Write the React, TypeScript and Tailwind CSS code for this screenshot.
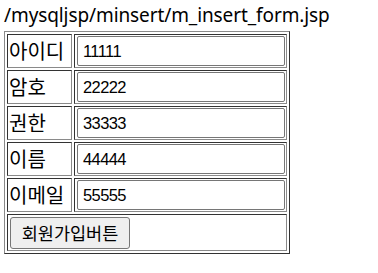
import React from "react";

const rows = [
  { label: "아이디", value: "11111" },
  { label: "암호", value: "22222" },
  { label: "권한", value: "33333" },
  { label: "이름", value: "44444" },
  { label: "이메일", value: "55555" },
];

const tdCls =
  "border border-t-[#333] border-l-[#333] border-r-[#8a8a8a] border-b-[#8a8a8a] p-px align-middle";

export default function App() {
  return (
    <div
      className="bg-white w-[378px] h-[273px] pl-[4px] text-black"
      style={{ fontFamily: '"Noto Sans", "Noto Sans CJK KR", sans-serif' }}
    >
      <div className="h-[31px] text-[19px] leading-[31px] tracking-[-0.1px] whitespace-nowrap">
        /mysqljsp/minsert/m_insert_form.jsp
      </div>
      <table className="border-separate border-spacing-[2px] border border-t-[#8a8a8a] border-l-[#8a8a8a] border-r-[#333] border-b-[#333]">
        <tbody>
          {rows.map((r) => (
            <tr key={r.label}>
              <td className={tdCls + " w-[65px] h-[34px]"}>
                <span
                  className="block text-[20px] leading-[30px] whitespace-nowrap"
                  style={{ fontFamily: '"Noto Sans CJK KR", sans-serif' }}
                >
                  {r.label}
                </span>
              </td>
              <td className={tdCls + " w-[213px] h-[34px]"}>
                <div className="ml-[1px] w-[208px] h-[30px] border border-[#767676] rounded-[2px] flex items-center px-[5px]">
                  <span
                    className="text-[16.5px] leading-none tracking-[-0.6px]"
                    style={{ fontFamily: '"Liberation Sans", Arial, sans-serif' }}
                  >
                    {r.value}
                  </span>
                </div>
              </td>
            </tr>
          ))}
          <tr>
            <td colSpan={2} className={tdCls + " h-[37px]"}>
              <button
                type="button"
                className="ml-[1px] w-[120px] h-[32px] border border-[#767676] rounded-[3px] bg-[#efefef] text-[17.5px] leading-none flex items-center justify-center"
                style={{ fontFamily: '"Noto Sans CJK KR", sans-serif' }}
              >
                회원가입버튼
              </button>
            </td>
          </tr>
        </tbody>
      </table>
    </div>
  );
}
